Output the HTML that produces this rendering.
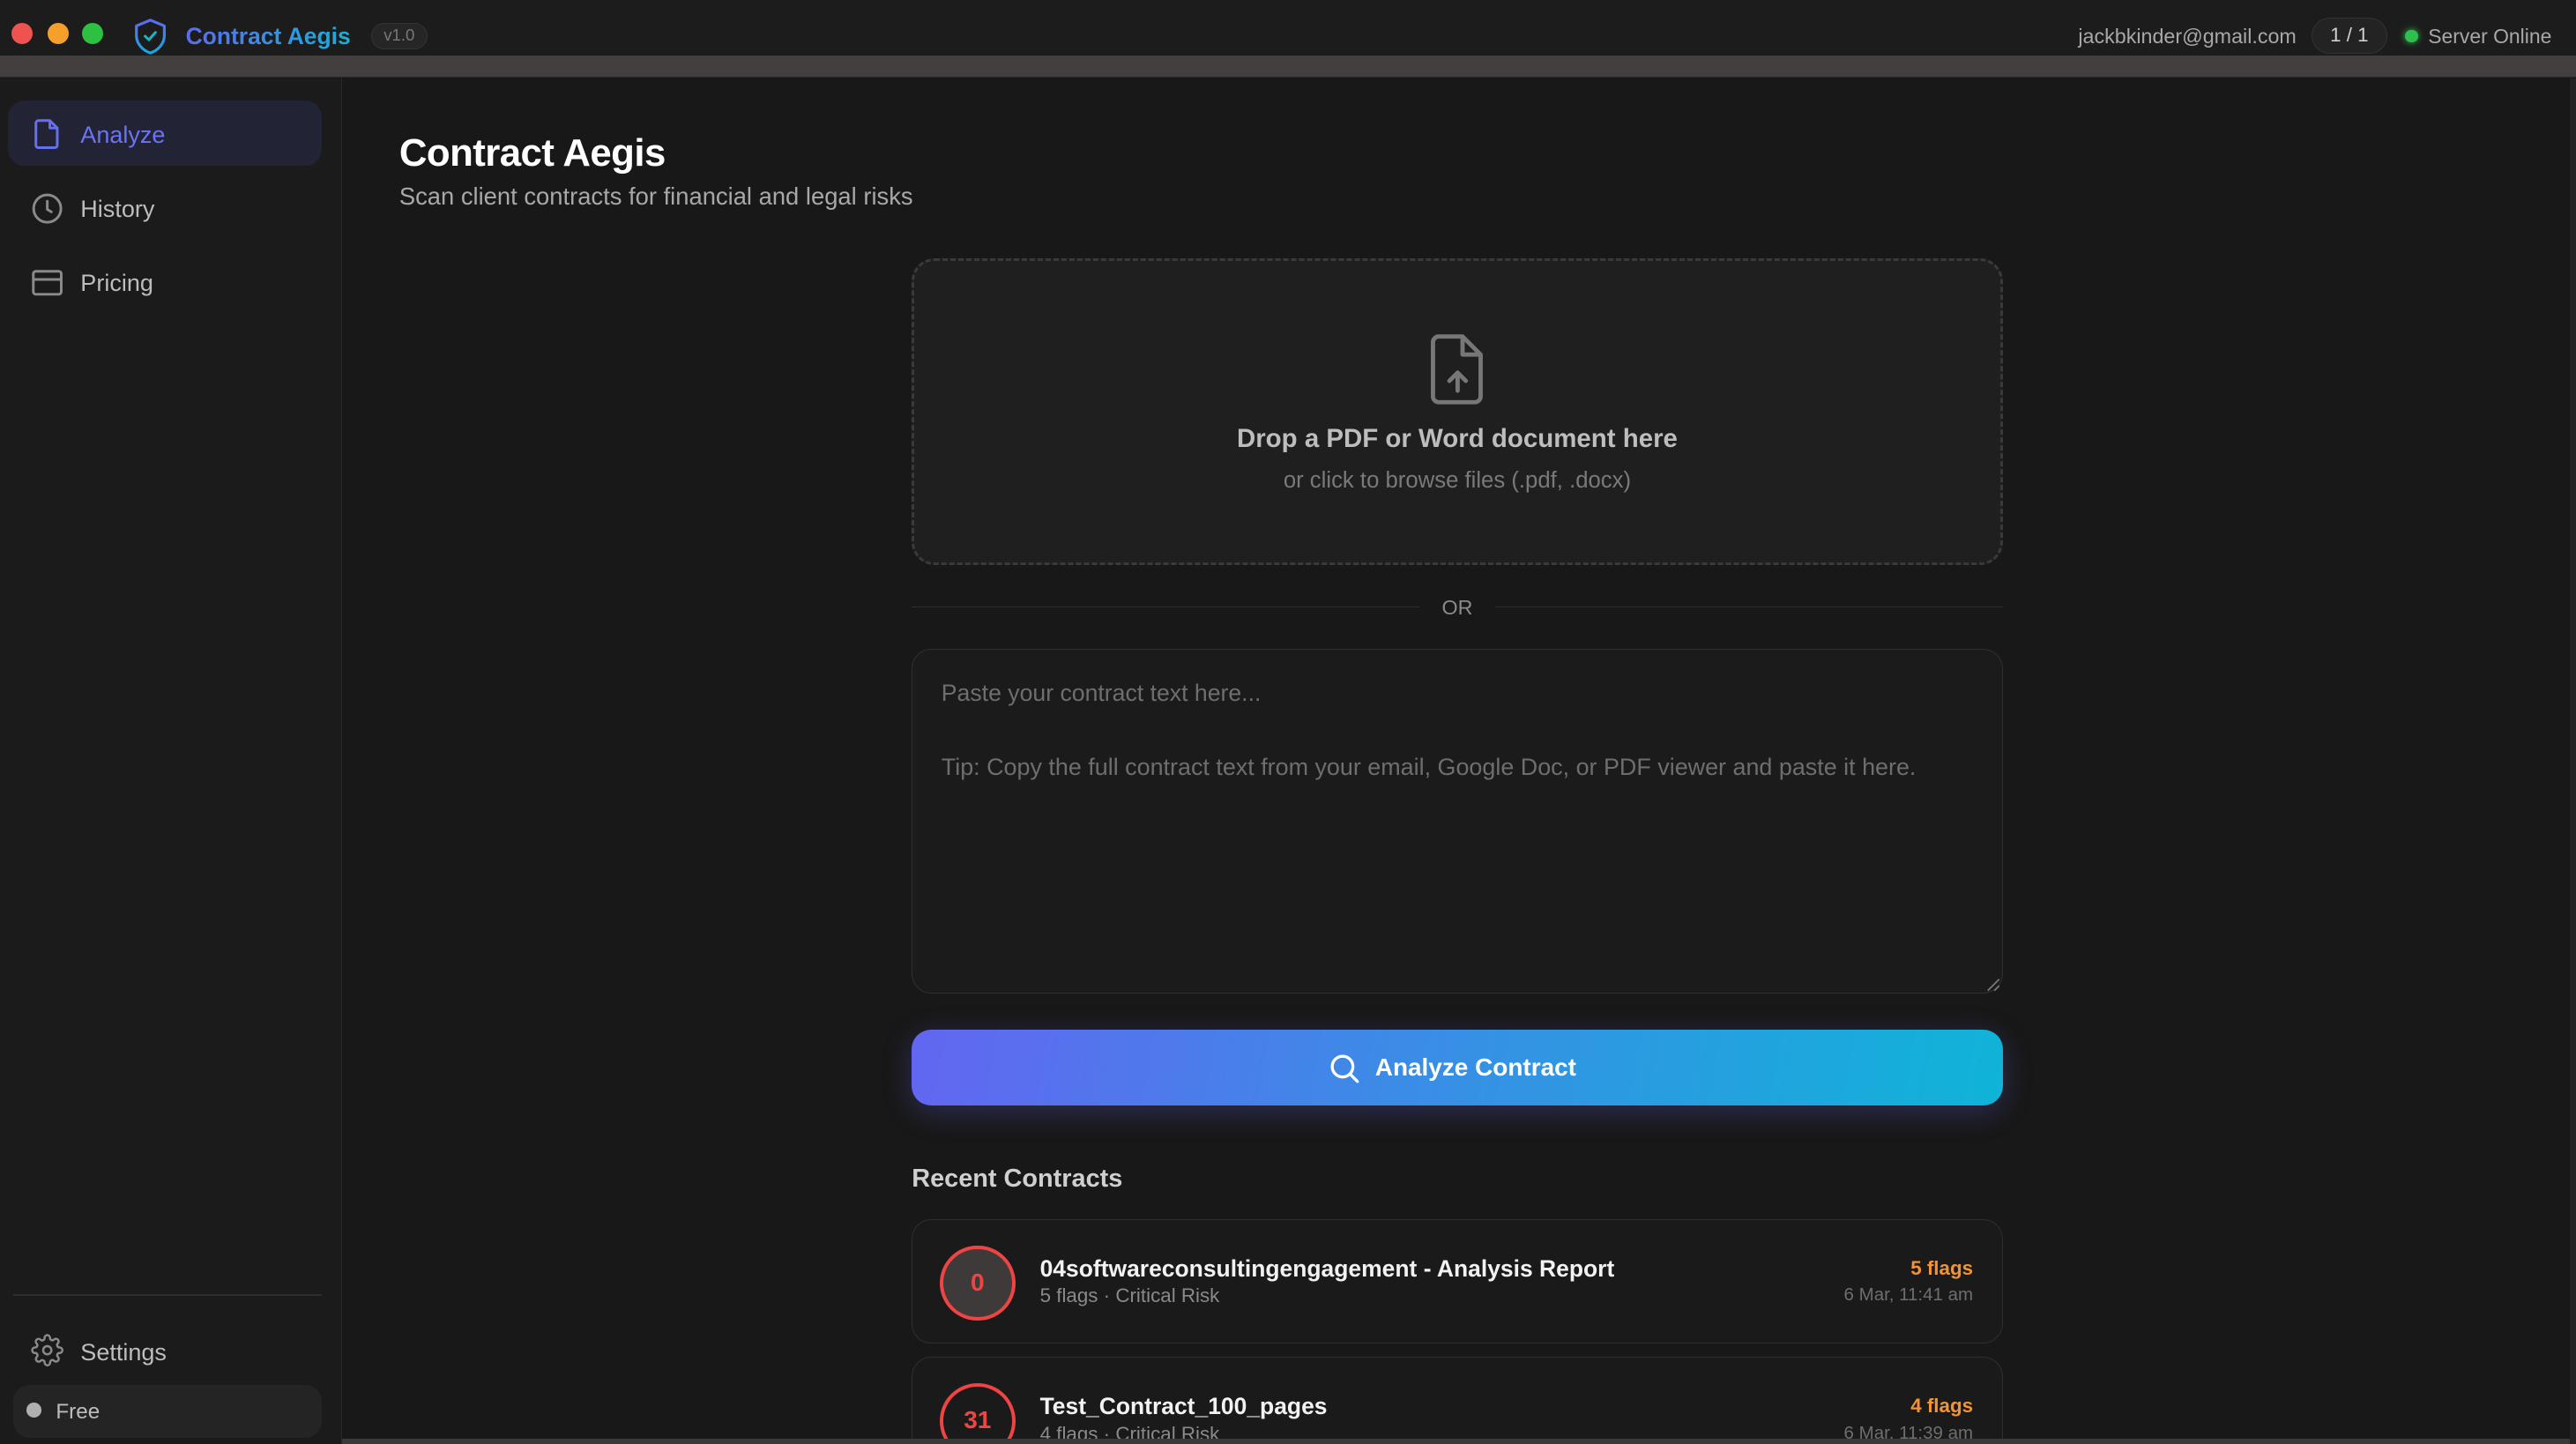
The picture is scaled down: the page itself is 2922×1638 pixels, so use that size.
<!DOCTYPE html>
<html><head><meta charset="utf-8"><style>
*{margin:0;padding:0;box-sizing:border-box}
html,body{width:2922px;height:1638px;overflow:hidden;background:#181818}
#w{position:absolute;left:0;top:0;width:1568px;height:879px;zoom:1.86352;font-family:"Liberation Sans",sans-serif;overflow:hidden;background:#181818}
.a{position:absolute;white-space:nowrap}
</style></head><body><div id="w">
<div class="a" style="left:0;top:0;width:1568px;height:34px;background:#1c1c1c"></div>
<div class="a" style="left:0;top:34px;width:1568px;height:13px;background:#433f3e;border-bottom:1px solid #2a2a2a"></div>
<div class="a" style="left:7px;top:14px;width:13px;height:13px;border-radius:50%;background:#ee5350"></div>
<div class="a" style="left:29px;top:14px;width:13px;height:13px;border-radius:50%;background:#f5a02b"></div>
<div class="a" style="left:50px;top:14px;width:13px;height:13px;border-radius:50%;background:#2cc140"></div>
<svg class="a" style="left:81px;top:11px" width="21" height="23" viewBox="0 0 21 23"><defs><linearGradient id="g1" x1="0" y1="0" x2="0" y2="1"><stop offset="0" stop-color="#5b6cf0"/><stop offset="1" stop-color="#1aa6e0"/></linearGradient></defs><path d="M10.5 1.5 L19 5 V11 C19 16 15 20 10.5 21.5 C6 20 2 16 2 11 V5 Z" fill="none" stroke="url(#g1)" stroke-width="1.7" stroke-linejoin="round"/><path d="M7.3 11.3 L9.6 13.5 L13.6 9" fill="none" stroke="#17b5c9" stroke-width="1.6" stroke-linecap="round" stroke-linejoin="round"/></svg>
<div class="a" style="left:113px;top:14px;font-size:14.2px;font-weight:bold;background:linear-gradient(90deg,#5b6cf0,#18b0d8);-webkit-background-clip:text;color:transparent">Contract Aegis</div>
<div class="a" style="left:226px;top:14px;width:34px;height:16px;border-radius:8px;background:#262626;border:1px solid #333;font-size:10px;color:#777;text-align:center;line-height:14px">v1.0</div>
<div class="a" style="left:1265px;top:15px;font-size:12.5px;color:#a8a8a8">jackbkinder@gmail.com</div>
<div class="a" style="left:1407px;top:11px;width:46px;height:22px;border-radius:11px;background:#232323;border:1px solid #333;font-size:12px;color:#cfcfcf;text-align:center;line-height:20px">1 / 1</div>
<div class="a" style="left:1464px;top:18px;width:8px;height:8px;border-radius:50%;background:#2fbf4f;box-shadow:0 0 4px #2fbf4f"></div>
<div class="a" style="left:1478px;top:15px;font-size:12.3px;color:#a8a8a8">Server Online</div>

<div class="a" style="left:0;top:48px;width:208px;height:831px;background:#1b1b1b;border-right:1px solid #2a2a2a"></div>
<div class="a" style="left:1564px;top:48px;width:4px;height:831px;background:#222"></div>
<div class="a" style="left:5px;top:61px;width:191px;height:40px;border-radius:10px;background:#232336"></div>
<svg class="a" style="left:20px;top:72px" width="18" height="19" viewBox="0 0 18 19"><path d="M3.5 1.5 H10.5 L15 6 V16.5 A1.5 1.5 0 0 1 13.5 18 H3.5 A1.5 1.5 0 0 1 2 16.5 V3 A1.5 1.5 0 0 1 3.5 1.5 Z M10.5 1.5 V6 H15" fill="none" stroke="#6670ee" stroke-width="1.6" stroke-linejoin="round"/></svg>
<div class="a" style="left:49px;top:74px;font-size:14.5px;color:#6b74f2">Analyze</div>
<svg class="a" style="left:19px;top:117px" width="20" height="20" viewBox="0 0 20 20"><circle cx="10" cy="10" r="8.3" fill="none" stroke="#8a8a8a" stroke-width="1.6"/><path d="M10 5.5 V10.5 L12.5 12" fill="none" stroke="#8a8a8a" stroke-width="1.6" stroke-linecap="round"/></svg>
<div class="a" style="left:49px;top:119px;font-size:14.5px;color:#bdbdbd">History</div>
<svg class="a" style="left:19px;top:163px" width="20" height="18" viewBox="0 0 20 18"><rect x="1.5" y="2" width="17" height="14" rx="1.5" fill="none" stroke="#8a8a8a" stroke-width="1.6"/><path d="M1.5 7 H18.5" stroke="#8a8a8a" stroke-width="1.6"/></svg>
<div class="a" style="left:49px;top:164px;font-size:14.5px;color:#bdbdbd">Pricing</div>
<div class="a" style="left:8px;top:788px;width:188px;height:1px;background:#2e2e2e"></div>
<svg class="a" style="left:19px;top:812px" width="20" height="20" viewBox="0 0 24 24"><path d="M12 15a3 3 0 1 0 0-6 3 3 0 0 0 0 6z" fill="none" stroke="#8a8a8a" stroke-width="1.6"/><path d="M19.4 15a1.65 1.65 0 0 0 .33 1.820l.06.06a2 2 0 1 1-2.83 2.83l-.06-.06a1.65 1.65 0 0 0-1.82-.33 1.65 1.650 0 0 0-1 1.51V21a2 2 0 1 1-4 0v-.09A1.65 1.65 0 0 0 9 19.4a1.65 1.65 0 0 0-1.82.33l-.06.06a2 2 0 1 1-2.83-2.83l.06-.06A1.65 1.65 0 0 0 4.68 15a1.65 1.65 0 0 0-1.51-1H3a2 2 0 1 1 0-4h.09A1.65 1.65 0 0 0 4.6 9a1.65 1.65 0 0 0-.33-1.820l-.06-.06a2 2 0 1 1 2.83-2.83l.06.06A1.65 1.65 0 0 0 9 4.68a1.65 1.65 0 0 0 1-1.51V3a2 2 0 1 1 4 0v.09a1.65 1.65 0 0 0 1 1.51 1.65 1.65 0 0 0 1.82-.33l.06-.06a2 2 0 1 1 2.83 2.830l-.06.06A1.65 1.65 0 0 0 19.4 9a1.65 1.65 0 0 0 1.51 1H21a2 2 0 1 1 0 4h-.09a1.65 1.65 0 0 0-1.51 1z" fill="none" stroke="#8a8a8a" stroke-width="1.6"/></svg>
<div class="a" style="left:49px;top:815px;font-size:14.5px;color:#bdbdbd">Settings</div>
<div class="a" style="left:8px;top:843px;width:188px;height:32px;border-radius:10px;background:#242424"></div>
<div class="a" style="left:16px;top:854px;width:9px;height:9px;border-radius:50%;background:#b0b0b0"></div>
<div class="a" style="left:34px;top:852px;font-size:13px;color:#bdbdbd">Free</div>

<div class="a" style="left:243px;top:80px;font-size:23.5px;font-weight:bold;color:#fff;letter-spacing:-0.3px">Contract Aegis</div>
<div class="a" style="left:243px;top:111px;font-size:14.7px;color:#a8a8a8">Scan client contracts for financial and legal risks</div>

<div class="a" style="left:555px;top:157px;width:664px;height:187px;border:2px dashed #3a3a3a;border-radius:14px;background:#1f1f1f"></div>
<svg class="a" style="left:868px;top:203px" width="38" height="44" viewBox="0 0 38 44"><path d="M5.5 2 H20 L31 13 V38.5 A3.5 3.5 0 0 1 27.5 42 H5.5 A3.5 3.5 0 0 1 2 38.5 V5.5 A3.5 3.5 0 0 1 5.5 2 Z M20 2 V13 H31" fill="none" stroke="#777" stroke-width="2.6" stroke-linejoin="round" transform="translate(2,0)"/><path d="M19 35 V24 M14 29 L19 24 L24 29" fill="none" stroke="#777" stroke-width="2.6" stroke-linecap="round" stroke-linejoin="round"/></svg>
<div class="a" style="left:555px;top:258px;width:664px;text-align:center;font-size:15.8px;font-weight:bold;color:#bdbdbd">Drop a PDF or Word document here</div>
<div class="a" style="left:555px;top:285px;width:664px;text-align:center;font-size:13.8px;color:#7a7a7a">or click to browse files (.pdf, .docx)</div>

<div class="a" style="left:555px;top:369px;width:309px;height:1px;background:#2f2f2f"></div>
<div class="a" style="left:910px;top:369px;width:309px;height:1px;background:#2f2f2f"></div>
<div class="a" style="left:864px;top:363px;width:46px;text-align:center;font-size:12.5px;color:#8a8a8a">OR</div>

<div class="a" style="left:555px;top:395px;width:664px;height:210px;border:1px solid #2f2f2f;border-radius:12px;background:#1b1b1b"></div>
<div class="a" style="left:573px;top:414px;font-size:14.3px;color:#6e6e6e">Paste your contract text here...</div>
<div class="a" style="left:573px;top:459px;font-size:14.45px;color:#6e6e6e">Tip: Copy the full contract text from your email, Google Doc, or PDF viewer and paste it here.</div>
<svg class="a" style="left:1208px;top:594px" width="10" height="10"><path d="M2 9 L9 2 M6 9 L9 6" stroke="#777" stroke-width="1"/></svg>

<div class="a" style="left:555px;top:627px;width:664px;height:46px;border-radius:12px;background:linear-gradient(100deg,#6366f1,#3b8ce6 45%,#0fb4d8);box-shadow:0 4px 18px rgba(99,102,241,0.28)"></div>
<svg class="a" style="left:809px;top:641px" width="19" height="19" viewBox="0 0 19 19"><circle cx="8" cy="8" r="6.3" fill="none" stroke="#fff" stroke-width="1.8"/><path d="M12.8 12.8 L17 17" stroke="#fff" stroke-width="1.8" stroke-linecap="round"/></svg>
<div class="a" style="left:837px;top:641px;font-size:15px;font-weight:bold;color:#fff">Analyze Contract</div>

<div class="a" style="left:555px;top:709px;font-size:15.5px;font-weight:bold;color:#cfcfcf">Recent Contracts</div>

<div class="a" style="left:555px;top:742px;width:664px;height:76px;border:1px solid #2e2e2e;border-radius:12px;background:#1a1a1a"></div>
<div class="a" style="left:572px;top:758px;width:46px;height:46px;border-radius:50%;border:2.5px solid #ef4444;background:#3e3a3a;text-align:center;line-height:41px;font-size:15px;font-weight:bold;color:#ef4444">0</div>
<div class="a" style="left:633px;top:764px;font-size:14.2px;font-weight:bold;color:#f2f2f2">04softwareconsultingengagement - Analysis Report</div>
<div class="a" style="left:633px;top:782px;font-size:12px;color:#8a8a8a">5 flags · Critical Risk</div>
<div class="a" style="left:1100px;top:765px;width:101px;text-align:right;font-size:12px;font-weight:bold;color:#f59331">5 flags</div>
<div class="a" style="left:1100px;top:782px;width:101px;text-align:right;font-size:11px;color:#6e6e6e">6 Mar, 11:41 am</div>

<div class="a" style="left:555px;top:826px;width:664px;height:76px;border:1px solid #2e2e2e;border-radius:12px;background:#1a1a1a"></div>
<div class="a" style="left:572px;top:842px;width:46px;height:46px;border-radius:50%;border:2.5px solid #ef4444;background:#1a1a1a;text-align:center;line-height:41px;font-size:15px;font-weight:bold;color:#ef4444">31</div>
<div class="a" style="left:633px;top:848px;font-size:14.2px;font-weight:bold;color:#f2f2f2">Test_Contract_100_pages</div>
<div class="a" style="left:633px;top:866px;font-size:12px;color:#8a8a8a">4 flags · Critical Risk</div>
<div class="a" style="left:1100px;top:849px;width:101px;text-align:right;font-size:12px;font-weight:bold;color:#f59331">4 flags</div>
<div class="a" style="left:1100px;top:866px;width:101px;text-align:right;font-size:11px;color:#6e6e6e">6 Mar, 11:39 am</div>
<div class="a" style="left:208px;top:876px;width:1356px;height:3px;background:#3a3a3a"></div>
</div></body></html>
